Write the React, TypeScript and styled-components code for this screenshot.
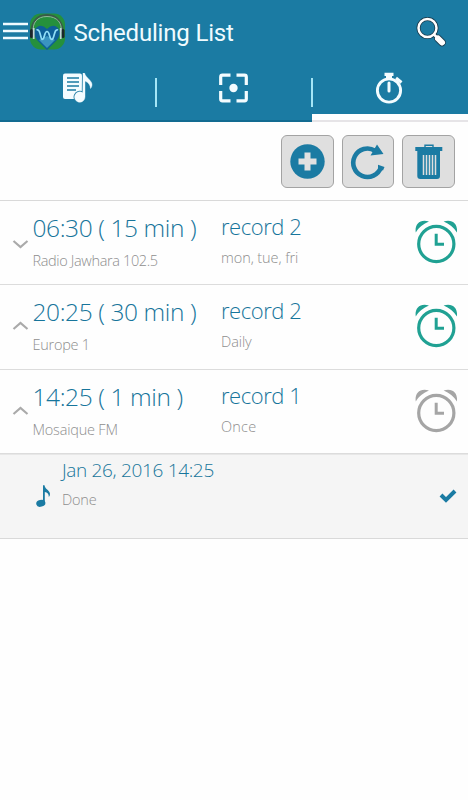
import React from 'react';
import styled, { createGlobalStyle } from 'styled-components';

const BLUE = '#1b7ba3';

const Global = createGlobalStyle`
  * { box-sizing: border-box; }
  body { margin: 0; background: #fefefe; overflow: hidden; }
  svg { display: block; flex: none; }
`;

const Screen = styled.main`
  width: 468px;
  height: 800px;
  display: flex;
  flex-direction: column;
  background: #fefefe;
  font-family: 'Open Sans', 'Noto Sans', sans-serif;
`;

const Header = styled.header`
  height: 122px;
  flex: none;
  background: ${BLUE};
`;

const TitleBar = styled.div`
  height: 64px;
  display: flex;
  align-items: center;
  padding: 0 21px 0 3px;
`;

const Title = styled.h1`
  margin: 2px auto 0 7.5px;
  color: #f0fbff;
  font: 400 24px/32px Roboto, sans-serif;
  letter-spacing: -0.18px;
  white-space: nowrap;
`;

const Tabs = styled.nav`
  height: 58px;
  display: grid;
  grid-template-columns: repeat(3, 156px);
`;

const Tab = styled.div`
  height: 58px;
  display: flex;
  flex-direction: column;
  align-items: center;
  justify-content: space-between;
  padding-top: 8px;
`;

const Underline = styled.div<{ $active?: boolean }>`
  width: 100%;
  height: ${p => (p.$active ? 8 : 2)}px;
  background: ${p => (p.$active ? '#fff' : '#126b91')};
  border-bottom: ${p => (p.$active ? '2px solid #e6e4e7' : '0')};
`;

const TabFace = styled.div<{ $divided?: boolean }>`
  width: 100%;
  height: 32px;
  display: flex;
  align-items: center;
  justify-content: center;
  position: relative;
  &::after {
    content: '';
    display: ${p => (p.$divided ? 'block' : 'none')};
    position: absolute;
    right: -1px;
    top: 6px;
    width: 2px;
    height: 29px;
    background: #a5e6f6;
  }
`;

const Toolbar = styled.div`
  height: 79px;
  flex: none;
  display: flex;
  justify-content: flex-end;
  gap: 8px;
  padding: 13px 13px 0 0;
  border-bottom: 1px solid #d9d9d9;
`;

const ToolButton = styled.button`
  width: 52.7px;
  height: 53px;
  padding: 0;
  display: flex;
  align-items: center;
  justify-content: center;
  background: #dfdfdf;
  border: 1px solid #a3a3a3;
  border-radius: 6px;
`;

const Row = styled.section<{ $height: number }>`
  height: ${p => p.$height}px;
  flex: none;
  display: grid;
  grid-template-columns: 32.5px 188.5px 1fr 53px;
  border-bottom: 1px solid #dcdcdc;
`;

const Toggle = styled.div<{ $up: boolean }>`
  padding: ${p => (p.$up ? 36 : 38)}px 0 0 12px;
`;

const Cell = styled.div<{ $top: number }>`
  padding-top: ${p => p.$top}px;
`;

const Line = styled.div<{ $size: number; $height: number; $spacing?: number; $muted?: boolean }>`
  font-size: ${p => p.$size}px;
  line-height: ${p => p.$height}px;
  letter-spacing: ${p => p.$spacing ?? 0}px;
  color: ${p => (p.$muted ? '#8e8e8e' : '#17759b')};
  font-weight: 300;
  white-space: pre;
`;

const AlarmSlot = styled.div`
  padding-top: 19px;
`;

const Detail = styled.section`
  height: 85px;
  flex: none;
  display: grid;
  grid-template-columns: 36px 26px 1fr 29px;
  background: #f5f5f5;
  border-top: 1px solid #e7e7e7;
  border-bottom: 1px solid #d9d9d9;
`;

const NoteSlot = styled.div`
  grid-column: 2;
  padding-top: 30px;
`;

const CheckSlot = styled.div`
  padding-top: 34px;
`;

const MenuIcon = () => (
  <svg width="25" height="20" viewBox="0 0 25 20">
    <path d="M0 2h25M0 9h25M0 16h25" stroke="#f0fbff" strokeWidth="2.600" />
  </svg>
);

const Logo = () => (
  <svg width="38" height="40" viewBox="0 0 38 40">
    <rect x="2" y="1.500" width="35" height="36" rx="11" fill="#25903c" />
    <path d="M19 38 9 28Q4 21 8 16q5-5 11 1 6-6 11-1 4 5-1 12Z" fill="#0d5f97" />
    <path d="M19 36 11 28l8-4 8 4Z" fill="#3a94c0" />
    <path d="M4 22C2 12 8 3 19 3s17 9 15.500 19" fill="none" stroke="#3a5a48" strokeWidth="1.800" />
    <path d="M5.500 20C4 11 9 4.500 19 4.500S34.500 11 33 20" fill="none" stroke="#8fb39a" strokeWidth="1" />
    <path d="M8.500 18c4-2 4 9 5.500 9.500 3 0 2-8 5-8s2 8 5 8c2.500-.5 2-11.500 6-9.500" fill="none" stroke="#8fdcf6" strokeWidth="1.700" />
    <rect x="2" y="17" width="3" height="9" rx="1.500" fill="#1b262b" />
    <rect x="33.500" y="17" width="3" height="9" rx="1.500" fill="#1b262b" />
    <path d="M5.700 16v11M32.700 16v11" stroke="#c3d4da" strokeWidth="1.700" />
  </svg>
);

const SearchIcon = () => (
  <svg width="31" height="31" viewBox="0 0 31 31">
    <g fill="none" stroke="#18384a">
      <circle cx="11.500" cy="11" r="9" strokeWidth="4" />
      <path d="m18 17.500 3 3" strokeWidth="4" />
      <path d="m22 21.500 4 4" strokeWidth="7.500" strokeLinecap="round" />
    </g>
    <g fill="none" stroke="#fff">
      <circle cx="11.500" cy="11" r="9" strokeWidth="2.500" />
      <path d="m18 17.500 3 3" strokeWidth="2.500" />
      <path d="m22 21.500 4 4" strokeWidth="6" strokeLinecap="round" />
    </g>
  </svg>
);

const noteShape = 'M20 0h1.500c1 4.500 7.500 7.500 7.500 11.500 0 1.800-.6 3-1.500 4-.2-3.500-2-6-5.500-7.500V24a5.200 5.200 0 1 1-2.200-4.200Z';

const PlaylistIcon = () => (
  <svg width="30" height="30" viewBox="0 0 30 30">
    <rect x="0" y="0.500" width="19" height="25.500" rx="2" fill="#f4fcff" />
    <path d="M4 5h12M4 9h12M4 13h12M4 17h9" stroke={BLUE} strokeWidth="1.300" />
    <path d={noteShape} fill={BLUE} stroke={BLUE} strokeWidth="2" />
    <path d={noteShape} fill="#f4fcff" stroke="#f4fcff" strokeWidth=".4" />
  </svg>
);

const FocusIcon = () => (
  <svg width="30" height="30" viewBox="0 0 30 30">
    <path d="M2.200 12V4q0-1.800 1.800-1.800h8M18 2.200h8q1.800 0 1.800 1.800v8M27.800 18v8q0 1.800-1.800 1.800h-8M12 27.800H4Q2.200 27.800 2.200 26v-8" fill="none" stroke="#f4fcff" strokeWidth="3.200" transform="translate(-.5 0)" />
    <circle cx="14.500" cy="15" r="4.200" fill="#f4fcff" />
  </svg>
);

const StopwatchIcon = () => (
  <svg width="30" height="32" viewBox="0 0 30 32">
    <circle cx="14" cy="18.500" r="11.600" fill="none" stroke="#f4fcff" strokeWidth="2.900" />
    <path d="M9.500.8h9V4H17v4h-6V4H9.500Z" fill="#f4fcff" />
    <path d="m21 6 5.500 4.500" stroke="#f4fcff" strokeWidth="3" />
    <path d="M14 11v8" stroke="#f4fcff" strokeWidth="3" strokeLinecap="round" />
  </svg>
);

const PlusIcon = () => (
  <svg width="35" height="35" viewBox="0 0 35 35">
    <circle cx="17.500" cy="17.500" r="17.200" fill={BLUE} />
    <path d="M14.500 8.500h6v6h6v6h-6v6h-6v-6h-6v-6h6Z" fill="#e1e1e1" />
  </svg>
);

const RefreshIcon = () => (
  <svg width="36" height="36" viewBox="0 0 36 36">
    <path d="M25 6.700A14.200 14.200 0 1 0 31 23" fill="none" stroke={BLUE} strokeWidth="4.600" />
    <path d="m27 .5 6.500 9.500-13 1.500ZM28 20.800l6.500 2.200-1.500 3.500-5-1.800Z" fill={BLUE} />
  </svg>
);

const TrashIcon = () => (
  <svg width="28" height="36" viewBox="0 0 28 36">
    <path d="M10 4V1.300h8V4" fill="none" stroke={BLUE} strokeWidth="1.400" />
    <path d="M.3 3h27v4H.3ZM2.300 7h22.700v25q0 3-3 3H5.300q-3 0-3-3Z" fill={BLUE} />
    <path d="M8.500 11v20M11.500 11v20M14.500 11v20M17.500 11v20M20.500 11v20" stroke="#dfdfdf" strokeWidth="1.500" />
  </svg>
);

const Chevron = ({ up }: { up?: boolean }) => (
  <svg width="17" height="10" viewBox="0 0 17 10">
    <path d={up ? 'M1.500 8 8.500 2l7 6' : 'M1.500 2l7 6 7-6'} fill="none" stroke="#aaa" strokeWidth="2.200" />
  </svg>
);

const AlarmIcon = ({ color }: { color: string }) => (
  <svg width="43" height="44" viewBox="0 0 43 44">
    <circle cx="21.300" cy="24" r="17.600" fill="none" stroke={color} strokeWidth="3.200" />
    <path d="M.8 12.500C-.6 5 4.500-1.500 14 1.500 8.500 4 3.500 7.500.8 12.500ZM41.800 12.500C43.200 5 38.100-1.500 28.600 1.500 34.100 4 39.100 7.500 41.800 12.500Z" fill={color} />
    <path d="M21.200 13.800v10.500H29" fill="none" stroke={color} strokeWidth="3" />
  </svg>
);

const NoteIcon = () => (
  <svg width="15" height="23" viewBox="0 0 15 23">
    <ellipse cx="4.800" cy="18.300" rx="4.600" ry="3.400" fill={BLUE} transform="rotate(-15 4.800 18.300)" />
    <path d="M7 .3h1.500C9.200 4.500 14 5.500 14 9q0 2-1.200 3c.2-3-1.500-4.500-4-5v11.500H7Z" fill={BLUE} />
  </svg>
);

const CheckIcon = () => (
  <svg width="18" height="14" viewBox="0 0 18 14">
    <path d="m2 6 5 5L16 2" fill="none" stroke={BLUE} strokeWidth="4" />
  </svg>
);

const schedules = [
  { time: '06:30 ( 15 min )', station: 'Radio Jawhara 102.5', name: 'record 2', repeat: 'mon, tue, fri', on: true, up: false, height: 84, stationSpacing: -0.36, repeatSpacing: -0.08 },
  { time: '20:25 ( 30 min )', station: 'Europe 1', name: 'record 2', repeat: 'Daily', on: true, up: true, height: 85, stationSpacing: -0.25, repeatSpacing: -0.1 },
  { time: '14:25 ( 1 min )', station: 'Mosaique FM', name: 'record 1', repeat: 'Once', on: false, up: true, height: 84, stationSpacing: -0.2, repeatSpacing: 0.2 },
];

export default function App() {
  return (
    <Screen>
      <Global />
      <Header>
        <TitleBar>
          <MenuIcon />
          <Logo />
          <Title>Scheduling List</Title>
          <SearchIcon />
        </TitleBar>
        <Tabs>
          <Tab><TabFace $divided><PlaylistIcon /></TabFace><Underline /></Tab>
          <Tab><TabFace $divided><FocusIcon /></TabFace><Underline /></Tab>
          <Tab><TabFace><StopwatchIcon /></TabFace><Underline $active /></Tab>
        </Tabs>
      </Header>
      <Toolbar>
        <ToolButton aria-label="Add"><PlusIcon /></ToolButton>
        <ToolButton aria-label="Refresh"><RefreshIcon /></ToolButton>
        <ToolButton aria-label="Delete"><TrashIcon /></ToolButton>
      </Toolbar>
      {schedules.map(s => (
        <Row key={s.time} $height={s.height}>
          <Toggle $up={s.up}><Chevron up={s.up} /></Toggle>
          <Cell $top={11}>
            <Line $size={24.5} $height={32} $spacing={-0.4}>{s.time}</Line>
            <Line $size={14.5} $height={34} $spacing={s.stationSpacing} $muted>{s.station}</Line>
          </Cell>
          <Cell $top={9}>
            <Line $size={22} $height={32} $spacing={-0.45}>{s.name}</Line>
            <Line $size={14.5} $height={31} $spacing={s.repeatSpacing} $muted>{s.repeat}</Line>
          </Cell>
          <AlarmSlot><AlarmIcon color={s.on ? '#20a193' : '#a5a5a5'} /></AlarmSlot>
        </Row>
      ))}
      <Detail>
        <NoteSlot><NoteIcon /></NoteSlot>
        <Cell $top={1}>
          <Line $size={19} $height={28} $spacing={-0.33}>Jan 26, 2016 14:25</Line>
          <Line $size={14.5} $height={31} $spacing={-0.2} $muted>Done</Line>
        </Cell>
        <CheckSlot><CheckIcon /></CheckSlot>
      </Detail>
    </Screen>
  );
}
